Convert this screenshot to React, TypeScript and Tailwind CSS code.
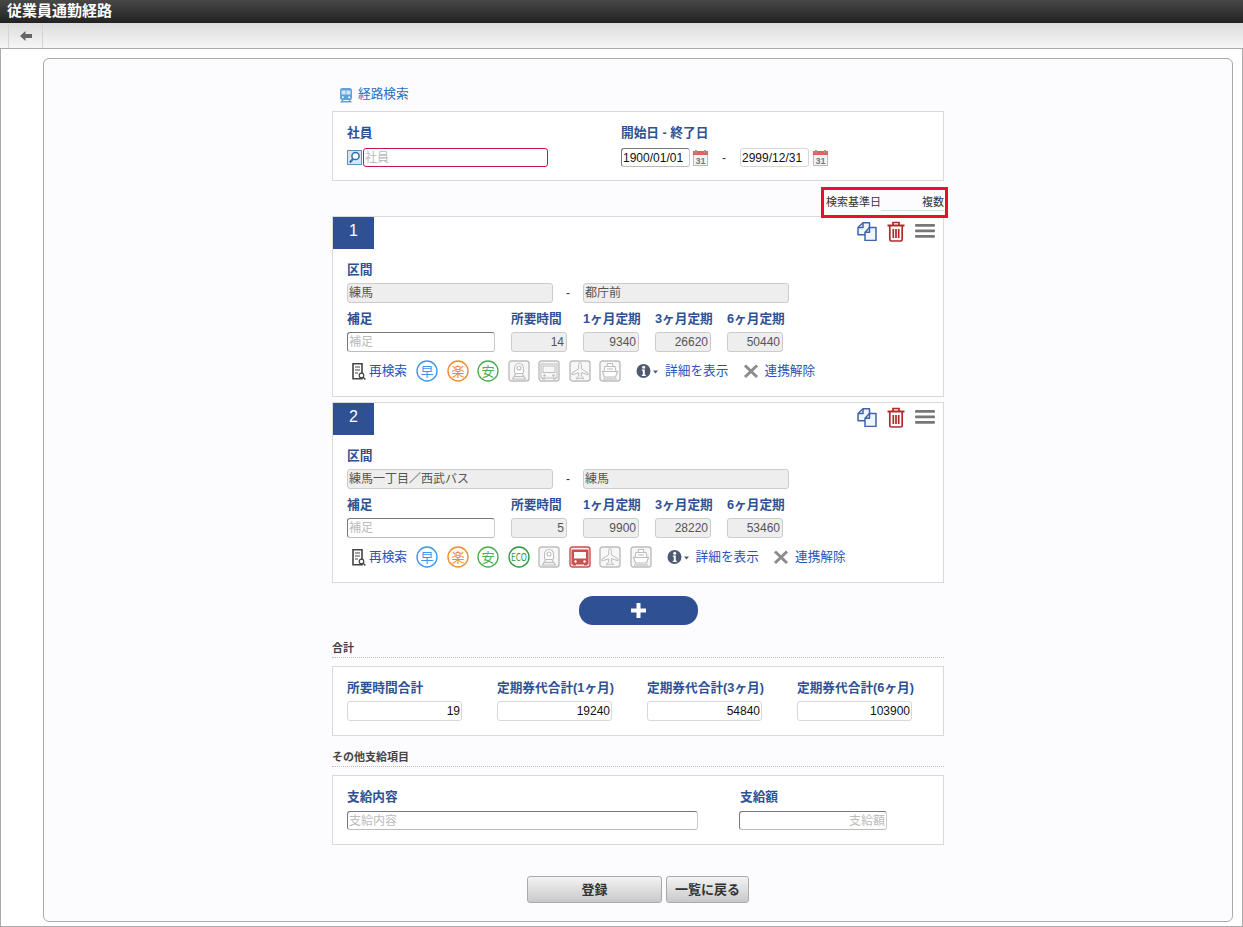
import React from "react";

const FONT = "font-['Liberation_Sans','Noto_Sans_CJK_JP',sans-serif]";

function Label({ children, className = "" }: { children: React.ReactNode; className?: string }) {
  return <div className={`text-[12.7px] leading-[14px] font-bold text-[#2f5193] whitespace-nowrap ${className}`}>{children}</div>;
}

function Input({ value, placeholder, w, h = "h-[20px]", right, dark, strong }: { value?: string; placeholder?: string; w: string; h?: string; right?: boolean; dark?: boolean; strong?: boolean }) {
  const border = strong
    ? "border-[#777] border-r-[#ccc] border-b-[#bbb]"
    : dark
      ? "border-[#d8d8d8]"
      : "border-[#ccc]";
  return (
    <div className={`${w} ${h} shrink-0 border ${border} rounded-[3px] bg-white px-[1px] flex items-center text-[12px] leading-none whitespace-nowrap overflow-hidden ${right ? "justify-end" : ""} ${value ? "text-[#111]" : "text-[#bbb]"}`}>
      {value ?? placeholder}
    </div>
  );
}

function Ro({ value, w, right }: { value: string; w: string; right?: boolean }) {
  return (
    <div className={`${w} h-[20px] shrink-0 border border-[#ccc] rounded-[3px] bg-[#eeeeee] flex items-center text-[12px] leading-none text-[#555] whitespace-nowrap ${right ? "justify-end pr-[2px]" : "pl-[1px]"}`}>
      {value}
    </div>
  );
}

function CalIcon() {
  return (
    <svg width="15" height="16" viewBox="0 0 15 16" className="shrink-0">
      <rect x="0.5" y="1.5" width="14" height="14" fill="#f4f4f4" stroke="#bbb" />
      <rect x="0" y="1" width="15" height="4" fill="#e8605a" />
      <rect x="2" y="0" width="2" height="3" fill="#999" />
      <rect x="11" y="0" width="2" height="3" fill="#999" />
      <text x="7.5" y="14" textAnchor="middle" fontSize="9" fontWeight="700" fill="#777" fontFamily="Liberation Sans">31</text>
    </svg>
  );
}

function SearchIcon() {
  return (
    <svg width="15" height="15" viewBox="0 0 15 15" className="shrink-0">
      <rect x="0.5" y="0.5" width="14" height="14" fill="#d6e6f4" stroke="#5e8fbd" />
      <circle cx="8.5" cy="6" r="3.6" fill="#fff" stroke="#2f6ea8" strokeWidth="1.5" />
      <path d="M6 9 L2.8 12.500" stroke="#2f6ea8" strokeWidth="2" />
    </svg>
  );
}

function TrainIcon() {
  return (
    <svg width="14" height="16" viewBox="0 0 14 16" className="shrink-0">
      <path d="M3.500 1h7A2.500 2.500 0 0 1 13 3.500V11a2 2 0 0 1-2 2H3a2 2 0 0 1-2-2V3.500A2.500 2.500 0 0 1 3.500 1z" fill="#5aa3dc" />
      <rect x="2.500" y="3.500" width="9" height="4" fill="#d4e7f6" />
      <rect x="6.600" y="3.500" width="0.800" height="4" fill="#5aa3dc" />
      <circle cx="3.800" cy="10.300" r="1" fill="#fff" />
      <circle cx="10.200" cy="10.300" r="1" fill="#fff" />
      <path d="M3 13l-2 2.500h12L11 13h-1.500l.8 1H3.700l.8-1z" fill="#5aa3dc" />
    </svg>
  );
}

function CopyIcon() {
  return (
    <svg width="20" height="19" viewBox="0 0 20 19" fill="#f2f5fb" stroke="#3f64a8" strokeWidth="1.5" strokeLinejoin="round" className="shrink-0">
      <path d="M6 .8h6.500v12H1V5.500z" />
      <path d="M6 .8v4.700H1" fill="none" />
      <path d="M12.500 5.500h6.500v13H8v-8.200z" />
      <path d="M12.500 5.500v4.800H8" fill="none" />
    </svg>
  );
}

function TrashIcon() {
  return (
    <svg width="18" height="21" viewBox="0 0 18 21" fill="none" stroke="#b02a2a" strokeWidth="1.7" className="shrink-0">
      <path d="M.5 4.500h17" strokeWidth="2" />
      <path d="M6 4V1.500h6V4" />
      <path d="M2.800 5v13.500A1.500 1.500 0 0 0 4.300 20h9.400a1.500 1.500 0 0 0 1.500-1.500V5" />
      <path d="M6.300 8v9M9 8v9M11.700 8v9" />
    </svg>
  );
}

function MenuIcon() {
  return (
    <svg width="20" height="14" viewBox="0 0 20 14" className="shrink-0" fill="#777">
      <rect x="0" y="0" width="20" height="2.800" rx="1" />
      <rect x="0" y="5.500" width="20" height="2.800" rx="1" />
      <rect x="0" y="11" width="20" height="2.800" rx="1" />
    </svg>
  );
}

function DocSearch() {
  return (
    <svg width="14" height="17" viewBox="0 0 14 17" className="shrink-0">
      <path d="M1 0.800h9v15H1z" fill="#fff" stroke="#444" strokeWidth="1.600" />
      <path d="M3 4h5M3 7h5M3 10h3" stroke="#444" strokeWidth="1.200" />
      <circle cx="9.500" cy="12.500" r="2.300" fill="#fff" stroke="#444" strokeWidth="1.200" />
      <path d="M11 14.200L13.400 16.400" stroke="#444" strokeWidth="1.400" />
    </svg>
  );
}

function Circle({ text, color, eco }: { text: string; color: string; eco?: boolean }) {
  return (
    <svg width="22" height="22" viewBox="0 0 22 22" className="shrink-0 overflow-visible">
      <circle cx="11" cy="11" r="10" fill="#fff" stroke={color} strokeWidth="1.400" />
      <text x="11" y={eco ? 15 : 15.500} textAnchor="middle" fontSize={eco ? 11 : 13} textLength={eco ? 16 : undefined} lengthAdjust="spacingAndGlyphs" fill={color} fontFamily="Noto Sans CJK JP, Liberation Sans, sans-serif">{text}</text>
    </svg>
  );
}

function Square({ kind, active }: { kind: "shin" | "bus" | "plane" | "ship"; active?: boolean }) {
  const c = active ? "#c8504f" : "#bdbdbd";
  return (
    <svg width="22" height="22" viewBox="0 0 22 22" className="shrink-0">
      <rect x="1" y="1" width="20" height="20" rx="2.500" fill={active ? "#fbeeee" : "#f7f7f7"} stroke={c} strokeWidth="1.400" />
      {kind === "shin" && (
        <g fill="none" stroke={c} strokeWidth="1.100">
          <path d="M11 3.500c3 0 4.500 2.500 4.500 5.500v3c0 1-.7 1.500-1.500 1.500H8c-.8 0-1.500-.5-1.500-1.500V9c0-3 1.500-5.500 4.500-5.500z" fill="#fff" />
          <circle cx="11" cy="8" r="2" />
          <path d="M8 13.500L4.500 19h13L14 13.500" />
          <path d="M6.500 16.500h9" />
        </g>
      )}
      {kind === "bus" && (
        <g>
          <rect x="3" y="4" width="16" height="14" fill={active ? c : "#f7f7f7"} stroke={c} strokeWidth="1" />
          <rect x="5" y="6" width="12" height="6.500" fill={active ? "#fff" : "#f7f7f7"} stroke={active ? "none" : c} strokeWidth="1" />
          <circle cx="6.500" cy="15.500" r="1.200" fill={active ? "#fff" : c} />
          <circle cx="15.500" cy="15.500" r="1.200" fill={active ? "#fff" : c} />
          <path d="M4 18h3v1.500H4zM15 18h3v1.500h-3z" fill={c} />
        </g>
      )}
      {kind === "plane" && (
        <path d="M11 2.500c1 0 1.400 1.500 1.400 3v3.300l6.600 4.200v1.800l-6.600-2.200v3.400l2 1.500v1.200L11 18l-3.400.999v-1.200l2-1.500v-3.400L3 14.800V13l6.600-4.200V5.500c0-1.500.4-3 1.400-3z" fill="#f7f7f7" stroke={c} strokeWidth="1" />
      )}
      {kind === "ship" && (
        <g fill="#fff" stroke={c} strokeWidth="1.100">
          <path d="M8.500 3.500h5l.5 3H8z" />
          <path d="M6 6.500h10l1 5H5z" />
          <path d="M3.500 11.500h15l-2 5.500h-11z" />
          <path d="M8 9h6" />
          <path d="M4 19h14" />
        </g>
      )}
    </svg>
  );
}

function InfoIcon() {
  return (
    <svg width="24" height="16" viewBox="0 0 24 16" className="shrink-0">
      <circle cx="7.500" cy="8" r="7" fill="#4f5a70" />
      <circle cx="7.700" cy="4.300" r="1.500" fill="#fff" />
      <path d="M5.800 6.600h3v5.200h1v1.200H5.800v-1.200h1v-4h-1z" fill="#fff" />
      <path d="M17 7.500h5l-2.500 3z" fill="#4f5a70" />
    </svg>
  );
}

function XIcon() {
  return (
    <svg width="16" height="16" viewBox="0 0 16 16" className="shrink-0" stroke="#8c8c8c" strokeWidth="3">
      <path d="M2 2.500L14 14M14 2.500L2 14" />
    </svg>
  );
}

const LINK = "text-[12.700px] leading-[14px] text-[#2a52b8] whitespace-nowrap";

function RouteCard({ n, from, to, time, m1, m3, m6, eco, busActive, className = "" }: { n: string; from: string; to: string; time: string; m1: string; m3: string; m6: string; eco?: boolean; busActive?: boolean; className?: string }) {
  return (
    <div className={`border border-[#d9d9d9] bg-white h-[181px] ${className}`}>
      <div className="flex justify-between h-[32px]">
        <div className="w-[41px] h-[32px] bg-[#2f5193] text-white text-[16px] leading-[28px] text-center">{n}</div>
        <div className="flex items-start gap-[10px] pr-[8px] pt-[4px]">
          <div className="pt-[1px]"><CopyIcon /></div>
          <TrashIcon />
          <div className="pt-[3px]"><MenuIcon /></div>
        </div>
      </div>
      <div className="pl-[14px] pt-[14px]">
        <Label>区間</Label>
        <div className="flex items-center mt-[6px]">
          <Ro value={from} w="w-[206px]" />
          <span className="w-[30px] text-center text-[12px] text-[#333]">-</span>
          <Ro value={to} w="w-[206px]" />
        </div>
        <div className="flex mt-[9px] h-[14px]">
          <Label className="w-[164px]">補足</Label>
          <Label className="w-[72px]">所要時間</Label>
          <Label className="w-[72px]">1ヶ月定期</Label>
          <Label className="w-[72px]">3ヶ月定期</Label>
          <Label className="w-[72px]">6ヶ月定期</Label>
        </div>
        <div className="flex mt-[6px]">
          <div className="w-[164px]"><Input placeholder="補足" w="w-[148px]" strong /></div>
          <div className="w-[72px]"><Ro value={time} w="w-[56px]" right /></div>
          <div className="w-[72px]"><Ro value={m1} w="w-[56px]" right /></div>
          <div className="w-[72px]"><Ro value={m3} w="w-[56px]" right /></div>
          <div className="w-[72px]"><Ro value={m6} w="w-[56px]" right /></div>
        </div>
        <div className="flex items-center mt-[8px] h-[22px]">
          <div className="ml-[5px]"><DocSearch /></div>
          <a className={`${LINK} ml-[3px]`}>再検索</a>
          <div className="flex gap-[8.500px] ml-[9px]">
            <Circle text="早" color="#3b97f0" />
            <Circle text="楽" color="#f28a2e" />
            <Circle text="安" color="#4cae50" />
            {eco && <Circle text="ECO" color="#2c9a3c" eco />}
            <Square kind="shin" />
            <Square kind="bus" active={busActive} />
            <Square kind="plane" />
            <Square kind="ship" />
          </div>
          <div className="ml-[15px]"><InfoIcon /></div>
          <a className={`${LINK} ml-[5px]`}>詳細を表示</a>
          <div className="ml-[14px]"><XIcon /></div>
          <a className={`${LINK} ml-[6px]`}>連携解除</a>
        </div>
      </div>
    </div>
  );
}

function Heading({ children, className = "" }: { children: React.ReactNode; className?: string }) {
  return (
    <div className={`h-[18px] border-b border-dotted border-[#bbb] text-[11px] leading-[16px] font-bold text-[#444] ${className}`}>{children}</div>
  );
}

function Total({ label, value }: { label: string; value: string }) {
  return (
    <div className="w-[150px] shrink-0">
      <Label>{label}</Label>
      <div className="mt-[6px]"><Input value={value} w="w-[115px]" right dark /></div>
    </div>
  );
}

function Btn({ children, w }: { children: React.ReactNode; w: string }) {
  return (
    <div className={`${w} h-[27px] border border-[#aaa] rounded-[3px] bg-gradient-to-b from-[#f3f3f3] to-[#c9c9c9] flex items-center justify-center text-[13px] font-bold text-[#333]`}>{children}</div>
  );
}

export default function App() {
  return (
    <div className={`${FONT} w-[1243px] h-[927px] bg-white overflow-hidden flex flex-col`}>
      <div className="h-[23px] shrink-0 bg-gradient-to-b from-[#484848] to-[#222] text-white text-[15px] font-bold leading-[22px] pl-[7px]">従業員通勤経路</div>
      <div className="h-[26px] shrink-0 border-b border-[#aaa] bg-gradient-to-b from-[#dcdcdc] to-[#f6f6f6] pl-[8px] flex">
        <div className="w-[35px] h-full border-x border-[#d4d4d4] flex items-center justify-center">
          <svg width="12" height="10" viewBox="0 0 12 10" fill="#666"><path d="M0 5L5.500 0v3H12v4H5.500v3z" /></svg>
        </div>
      </div>
      <div className="flex-1 border-x border-b border-[#aaa] pl-[42px] pr-[9px] pt-[9px] pb-[4px]">
        <div className="h-[864px] border border-[#aaa] rounded-[6px] bg-[#fcfcff] pl-[288px]">
          <div className="w-[612px]">
            <div className="flex items-center h-[16px] mt-[28px] pl-[7px]">
              <TrainIcon />
              <span className="ml-[5px] text-[12.700px] text-[#2a6fc0]">経路検索</span>
            </div>
            <div className="mt-[8px] h-[70px] border border-[#d9d9d9] bg-white pl-[14px] pt-[14px] flex">
              <div className="w-[274px]">
                <Label>社員</Label>
                <div className="flex items-center gap-[1px] mt-[8px]">
                  <SearchIcon />
                  <div className="w-[185px] h-[19px] border border-[#c8144a] rounded-[3px] bg-white px-[1px] flex items-center text-[12px] text-[#bbb]">社員</div>
                </div>
              </div>
              <div>
                <Label>開始日 - 終了日</Label>
                <div className="flex items-center mt-[8px]">
                  <Input value="1900/01/01" w="w-[69px]" h="h-[19px]" strong />
                  <div className="ml-[3px]"><CalIcon /></div>
                  <span className="w-[32px] text-center text-[12px] text-[#333]">-</span>
                  <Input value="2999/12/31" w="w-[69px]" h="h-[19px]" dark />
                  <div className="ml-[4px]"><CalIcon /></div>
                </div>
              </div>
            </div>
            <div className="relative h-[35px] flex justify-end pt-[14px]">
              <span className="text-[11px] leading-[14px] text-[#333]">検索基準日</span>
              <span className="w-[63px] h-[16px] border-b border-[#ddd] text-right text-[11px] leading-[14px] text-[#333]">複数</span>
              <div className="absolute right-[-4px] top-[6px] w-[127px] h-[31px] border-[3px] border-[#e8112d]" />
            </div>
            <RouteCard n="1" from="練馬" to="都庁前" time="14" m1="9340" m3="26620" m6="50440" />
            <RouteCard n="2" className="mt-[5px]" from="練馬一丁目／西武バス" to="練馬" time="5" m1="9900" m3="28220" m6="53460" eco busActive />
            <div className="mt-[13px] flex justify-center">
              <div className="w-[119px] h-[29px] rounded-[14px] bg-[#2f5193] flex items-center justify-center">
                <svg width="15" height="15" viewBox="0 0 15 15" fill="#fff"><path d="M5.500 0h4v5.500H15v4H9.500V15h-4V9.500H0v-4h5.500z" /></svg>
              </div>
            </div>
            <Heading className="mt-[15px]">合計</Heading>
            <div className="mt-[8px] h-[70px] border border-[#d9d9d9] bg-white pl-[14px] pt-[14px] flex overflow-hidden">
              <Total label="所要時間合計" value="19" />
              <Total label="定期券代合計(1ヶ月)" value="19240" />
              <Total label="定期券代合計(3ヶ月)" value="54840" />
              <Total label="定期券代合計(6ヶ月)" value="103900" />
            </div>
            <Heading className="mt-[13px]">その他支給項目</Heading>
            <div className="mt-[8px] h-[70px] border border-[#d9d9d9] bg-white pl-[14px] pt-[14px] flex">
              <div className="w-[393px]">
                <Label>支給内容</Label>
                <div className="mt-[7px]"><Input placeholder="支給内容" w="w-[351px]" h="h-[19px]" strong /></div>
              </div>
              <div>
                <Label>支給額</Label>
                <div className="mt-[7px] -ml-[1px]"><Input placeholder="支給額" w="w-[148px]" h="h-[19px]" right strong /></div>
              </div>
            </div>
            <div className="mt-[31px] flex pl-[195px] gap-[4px]">
              <Btn w="w-[135px]">登録</Btn>
              <Btn w="w-[83px]">一覧に戻る</Btn>
            </div>
          </div>
        </div>
      </div>
    </div>
  );
}
